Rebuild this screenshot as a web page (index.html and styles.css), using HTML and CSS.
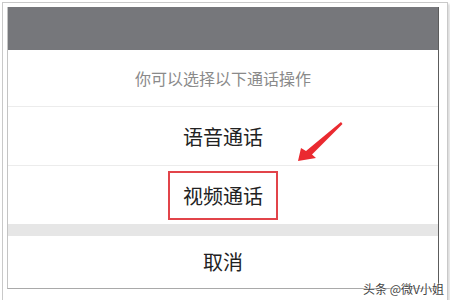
FILE: index.html
```html
<!DOCTYPE html>
<html>
<head>
<meta charset="utf-8">
<link rel="stylesheet" href="styles.css">
</head>
<body>
<div class="outer">
  <div class="screen">
    <div class="topbar"></div>
    <div class="hint">你可以选择以下通话操作</div>
    <div class="row">语音通话</div>
    <div class="row row-video"><span class="boxed">视频通话</span></div>
    <div class="gap"></div>
    <div class="row cancel">取消</div>
  </div>
  <svg class="arrow" width="60" height="50" viewBox="0 0 60 50">
    <polygon points="50,5 51.5,7 21,37.5 25,41 7,44 10,31 15,34" fill="#ea2a30"/>
  </svg>
  <div class="mark">头条 @微V小姐</div>
</div>
</body>
</html>
```
FILE: styles.css
```css
html, body {
  margin: 0;
  padding: 0;
  background: #ffffff;
}
body {
  width: 450px;
  height: 300px;
  overflow: hidden;
  font-family: "Noto Sans CJK SC", "Noto Sans", sans-serif;
}
.outer {
  position: relative;
  margin: 2px 0 0 2px;
  width: 436px;
  height: 289px;
  padding: 4px;
  border: 1px solid #c9c9c9;
  box-shadow: 2px 2px 2px #dcdcdc;
}
.screen {
  display: flex;
  flex-direction: column;
  height: 281px;
  width: 430px;
  background: #fff;
  border-left: 1px solid #c4c4c4;
  border-right: 1px solid #5c5c5c;
  border-bottom: 1px solid #a9a9a9;
  box-sizing: content-box;
}
.topbar {
  height: 43px;
  background: #76777b;
  flex: none;
}
.hint {
  height: 56px;
  border-bottom: 1px solid #ececec;
  display: flex;
  align-items: center;
  justify-content: center;
  font-size: 16px;
  color: #8a8a8a;
  flex: none;
}
.row {
  height: 58px;
  border-bottom: 1px solid #ececec;
  display: flex;
  align-items: center;
  justify-content: center;
  font-size: 20px;
  color: #222;
  flex: none;
}
.row-video {
  height: 58px;
  border-bottom: none;
}
.boxed {
  display: flex;
  align-items: center;
  justify-content: center;
  width: 106px;
  height: 45px;
  border: 2px solid #e2444a;
  margin-top: 1px;
}
.gap {
  height: 12px;
  background: #e6e6e6;
  flex: none;
}
.cancel {
  flex: 1;
  border-bottom: none;
  padding-bottom: 2px;
}
.arrow {
  position: absolute;
  left: 288px;
  top: 114px;
}
.mark {
  position: absolute;
  right: 3px;
  bottom: 3px;
  font-size: 12px;
  color: #444;
  text-shadow: 0 0 2px #fff, 0 0 2px #fff;
}
```
